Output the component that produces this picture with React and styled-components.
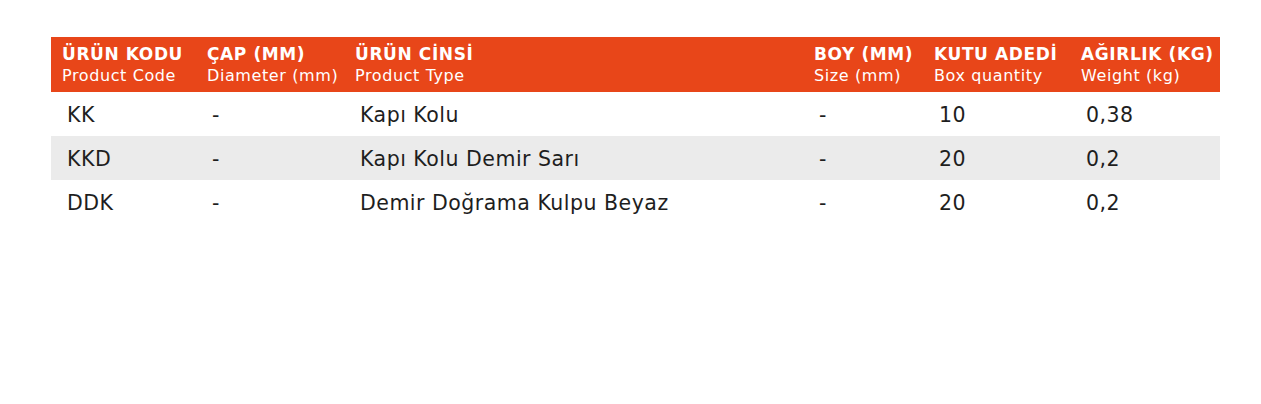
import React from "react";
import styled, { createGlobalStyle } from "styled-components";

const Global = createGlobalStyle`
  html, body { margin: 0; padding: 0; background: #fff; }
  body { font-family: "DejaVu Sans", "Liberation Sans", sans-serif; }
`;

const Page = styled.div`
  padding: 37px 41px 0 51px;
`;

const Table = styled.div`
  width: 1169px;
  display: grid;
  grid-template-columns: 145px 148px 459px 120px 147px 150px;
`;

const HeadCell = styled.div`
  background: #e84619;
  color: #fff;
  height: 55px;
  box-sizing: border-box;
  padding: 7px 0 0 11px;
  display: flex;
  flex-direction: column;
  white-space: nowrap;
`;

const HeadTitle = styled.span`
  font-family: "DejaVu Sans", "Liberation Sans", sans-serif;
  font-weight: 700;
  font-size: 17px;
  line-height: 20px;
  letter-spacing: 0.6px;
`;

const HeadSub = styled.span`
  font-family: "DejaVu Sans", "Liberation Sans", sans-serif;
  font-weight: 400;
  font-size: 16px;
  line-height: 24px;
  letter-spacing: 0.6px;
`;

const Cell = styled.div`
  height: 44px;
  display: flex;
  align-items: center;
  padding: 2px 0 0 16px;
  box-sizing: border-box;
  background: ${(p) => (p.$shade ? "#ebebeb" : "#fff")};
  color: #1e1e1e;
  font-family: "DejaVu Sans", "Liberation Sans", sans-serif;
  font-size: 20.5px;
  letter-spacing: 0.5px;
  white-space: nowrap;
`;

const headers = [
  ["ÜRÜN KODU", "Product Code"],
  ["ÇAP (MM)", "Diameter (mm)"],
  ["ÜRÜN CİNSİ", "Product Type"],
  ["BOY (MM)", "Size (mm)"],
  ["KUTU ADEDİ", "Box quantity"],
  ["AĞIRLIK (KG)", "Weight (kg)"],
];

const rows = [
  ["KK", "-", "Kapı Kolu", "-", "10", "0,38"],
  ["KKD", "-", "Kapı Kolu Demir Sarı", "-", "20", "0,2"],
  ["DDK", "-", "Demir Doğrama Kulpu Beyaz", "-", "20", "0,2"],
];

export default function App() {
  return (
    <>
      <Global />
      <Page>
        <Table>
          {headers.map(([t, s]) => (
            <HeadCell key={t}>
              <HeadTitle>{t}</HeadTitle>
              <HeadSub>{s}</HeadSub>
            </HeadCell>
          ))}
          {rows.map((r, i) =>
            r.map((v, j) => (
              <Cell key={i + "-" + j} $shade={i === 1}>
                {v}
              </Cell>
            ))
          )}
        </Table>
      </Page>
    </>
  );
}
